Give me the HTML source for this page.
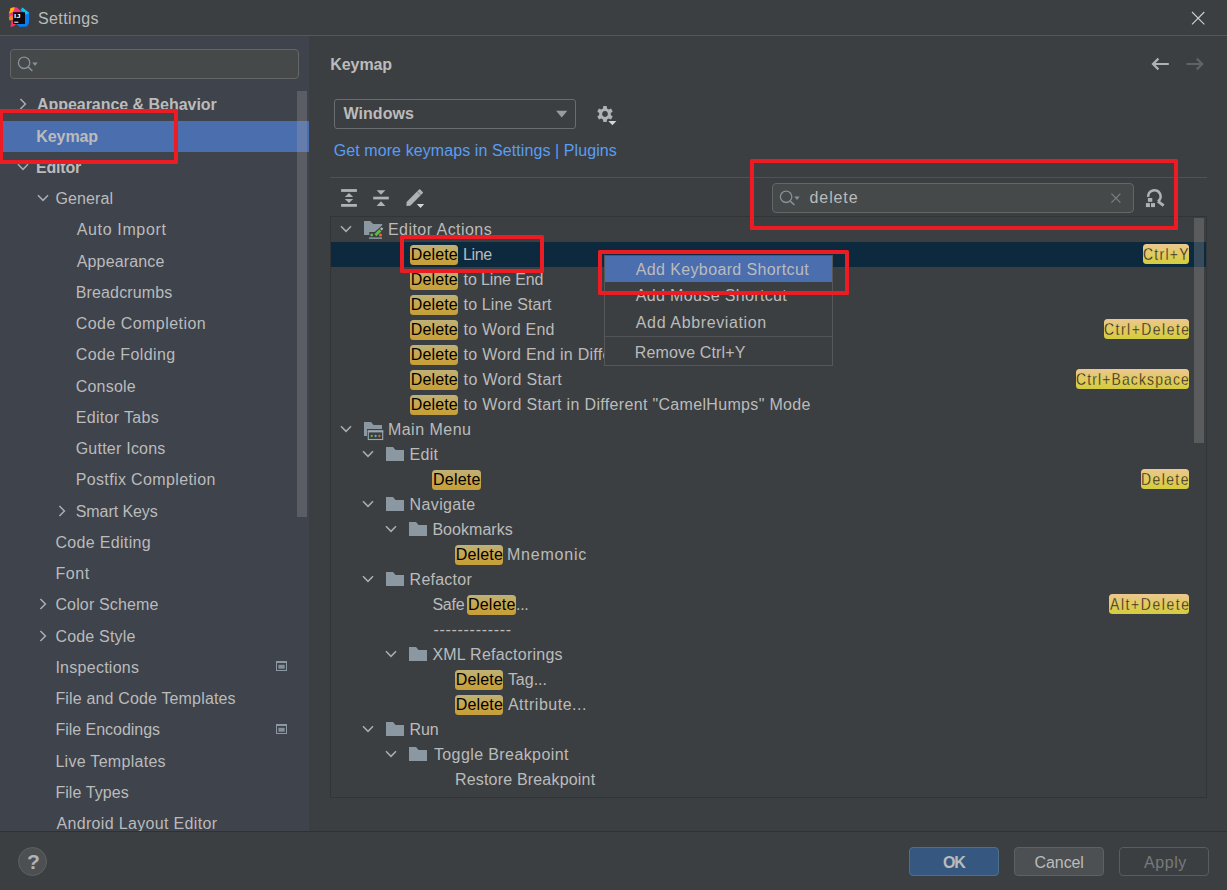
<!DOCTYPE html>
<html lang="en"><head><meta charset="utf-8"><title>Settings</title><style>
html,body{margin:0;padding:0}
body{width:1227px;height:890px;position:relative;overflow:hidden;background:#3c3f41;font-family:"Liberation Sans", sans-serif;font-size:16px;color:#bbbbbb}
body div,body span,body svg{position:absolute;display:block}
span{white-space:pre;line-height:20px;height:20px}
svg{overflow:visible}
</style></head>
<body>
<div style="left:0px;top:0px;width:1227px;height:35px;background:#3c3f41"></div>
<div style="left:0px;top:35px;width:1227px;height:1px;background:#555758"></div>
<div style="left:0px;top:36px;width:309px;height:795px;background:#3e434c"></div>
<div style="left:0px;top:831px;width:1227px;height:1px;background:#2f3133"></div>
<svg style="left:8px;top:6px" width="22" height="22" viewBox="0 0 22 22"><polygon points="1,6 4,1.5 9,1.5 13,5 11,11 6,13 0.8,10" fill="#fc2f7e"/><polygon points="2.5,2 7,1.2 5,6 1.2,7.5" fill="#fdb60d"/><polygon points="0.8,11 4,9 6,14 1.5,14.5" fill="#fc801d"/><polygon points="2.5,21 3.5,14 9,17 6,20" fill="#fe2d6f"/><polygon points="12.5,3.5 14.5,1.5 21.2,7 21,17 19,20.5 12,21 8.5,18.5 14,10" fill="#0a7bf2"/><polygon points="14.5,1.5 21.2,7 18,8.5 13,4" fill="#0cc4f5"/><rect x="5" y="6.2" width="12" height="11.8" fill="#0b0b0e"/><rect x="6.2" y="15.7" width="4.2" height="1" fill="#fff"/><text x="6" y="11.9" font-family="Liberation Sans, sans-serif" font-weight="700" font-size="6.2" fill="#fff" textLength="6.4" lengthAdjust="spacingAndGlyphs">IJ</text></svg>
<span style="left:37.9px;top:9px;font-size:16px;color:#bbbbbb;letter-spacing:0.41px;">Settings</span>
<svg style="left:1188px;top:8px" width="20" height="20" viewBox="0 0 20 20"><path d="M4 4 L16.3 16.3 M16.3 4 L4 16.3" stroke="#cfd0d1" stroke-width="1.1" fill="none"/></svg>
<div style="left:10px;top:49px;width:289px;height:30px;box-sizing:border-box;border:1px solid #646668;background:#45494a;border-radius:4px"></div>
<svg style="left:16px;top:54px" width="24" height="20" viewBox="0 0 24 20"><circle cx="8.1" cy="8.8" r="5.7" fill="none" stroke="#86929a" stroke-width="1.3"/><path d="M12.3 13.2 L16.4 17" stroke="#86929a" stroke-width="1.6" fill="none"/><path d="M16.3 8.6 L21.7 8.6 L19 11.9 Z" fill="#86929a"/></svg>
<div style="left:0px;top:121px;width:309px;height:31px;background:#4b6eaf"></div>
<div style="left:0;top:36px;width:309px;height:795px;overflow:hidden">
<span style="left:36.9px;top:59px;font-size:16px;color:#bbbbbb;letter-spacing:-0.03px;font-weight:700;">Appearance &amp; Behavior</span>
<svg style="left:15px;top:60.0px" width="16" height="16" viewBox="0 0 16 16"><path d="M5.4 3 L10.4 8 L5.4 13" fill="none" stroke="#abaeb0" stroke-width="1.55"/></svg>
<span style="left:36.3px;top:91px;font-size:16px;color:#bbbbbb;letter-spacing:-0.08px;font-weight:700;">Keymap</span>
<span style="left:35.9px;top:122px;font-size:16px;color:#bbbbbb;letter-spacing:-0.16px;font-weight:700;">Editor</span>
<svg style="left:15.2px;top:123.0px" width="16" height="16" viewBox="0 0 16 16"><path d="M3 5.3 L8 10.3 L13 5.3" fill="none" stroke="#abaeb0" stroke-width="1.55"/></svg>
<span style="left:55.4px;top:153px;font-size:16px;color:#bbbbbb;letter-spacing:0.12px;">General</span>
<svg style="left:35px;top:154.0px" width="16" height="16" viewBox="0 0 16 16"><path d="M3 5.3 L8 10.3 L13 5.3" fill="none" stroke="#abaeb0" stroke-width="1.55"/></svg>
<span style="left:76.7px;top:184px;font-size:16px;color:#bbbbbb;letter-spacing:0.65px;">Auto Import</span>
<span style="left:76.7px;top:216px;font-size:16px;color:#bbbbbb;letter-spacing:0.16px;">Appearance</span>
<span style="left:75.7px;top:247px;font-size:16px;color:#bbbbbb;letter-spacing:0.15px;">Breadcrumbs</span>
<span style="left:75.7px;top:278px;font-size:16px;color:#bbbbbb;letter-spacing:0.46px;">Code Completion</span>
<span style="left:75.7px;top:309px;font-size:16px;color:#bbbbbb;letter-spacing:0.39px;">Code Folding</span>
<span style="left:75.7px;top:341px;font-size:16px;color:#bbbbbb;letter-spacing:0.23px;">Console</span>
<span style="left:75.7px;top:372px;font-size:16px;color:#bbbbbb;letter-spacing:0.34px;">Editor Tabs</span>
<span style="left:75.7px;top:403px;font-size:16px;color:#bbbbbb;letter-spacing:0.23px;">Gutter Icons</span>
<span style="left:75.7px;top:434px;font-size:16px;color:#bbbbbb;letter-spacing:0.37px;">Postfix Completion</span>
<span style="left:75.7px;top:466px;font-size:16px;color:#bbbbbb;letter-spacing:-0.07px;">Smart Keys</span>
<svg style="left:54.3px;top:466.5px" width="16" height="16" viewBox="0 0 16 16"><path d="M5.4 3 L10.4 8 L5.4 13" fill="none" stroke="#abaeb0" stroke-width="1.55"/></svg>
<span style="left:55.4px;top:497px;font-size:16px;color:#bbbbbb;letter-spacing:0.33px;">Code Editing</span>
<span style="left:55.4px;top:528px;font-size:16px;color:#bbbbbb;letter-spacing:0.63px;">Font</span>
<span style="left:55.4px;top:559px;font-size:16px;color:#bbbbbb;letter-spacing:0.15px;">Color Scheme</span>
<svg style="left:34.9px;top:560.0px" width="16" height="16" viewBox="0 0 16 16"><path d="M5.4 3 L10.4 8 L5.4 13" fill="none" stroke="#abaeb0" stroke-width="1.55"/></svg>
<span style="left:55.4px;top:591px;font-size:16px;color:#bbbbbb;letter-spacing:0.19px;">Code Style</span>
<svg style="left:34.9px;top:591.5px" width="16" height="16" viewBox="0 0 16 16"><path d="M5.4 3 L10.4 8 L5.4 13" fill="none" stroke="#abaeb0" stroke-width="1.55"/></svg>
<span style="left:55.4px;top:622px;font-size:16px;color:#bbbbbb;letter-spacing:0.27px;">Inspections</span>
<span style="left:55.4px;top:653px;font-size:16px;color:#bbbbbb;letter-spacing:0.16px;">File and Code Templates</span>
<span style="left:55.4px;top:684px;font-size:16px;color:#bbbbbb;letter-spacing:-0.02px;">File Encodings</span>
<span style="left:55.4px;top:716px;font-size:16px;color:#bbbbbb;letter-spacing:0.29px;">Live Templates</span>
<span style="left:55.4px;top:747px;font-size:16px;color:#bbbbbb;letter-spacing:0.07px;">File Types</span>
<span style="left:56.4px;top:778px;font-size:16px;color:#bbbbbb;letter-spacing:0.34px;">Android Layout Editor</span>
<svg style="left:275px;top:623.8px" width="13" height="12" viewBox="0 0 13 12"><rect x="1.5" y="1.5" width="10" height="9" fill="none" stroke="#8d98a0" stroke-width="1"/><rect x="1" y="1" width="11" height="2" fill="#8d98a0"/><rect x="3.4" y="4.8" width="6.3" height="3.9" fill="#848f97"/></svg>
<svg style="left:275px;top:687px" width="13" height="12" viewBox="0 0 13 12"><rect x="1.5" y="1.5" width="10" height="9" fill="none" stroke="#8d98a0" stroke-width="1"/><rect x="1" y="1" width="11" height="2" fill="#8d98a0"/><rect x="3.4" y="4.8" width="6.3" height="3.9" fill="#848f97"/></svg>
</div>
<div style="left:297px;top:91px;width:10px;height:426px;background:rgba(166,166,166,0.28)"></div>
<span style="left:330.3px;top:55px;font-size:16px;color:#bbbbbb;letter-spacing:-0.08px;font-weight:700;">Keymap</span>
<svg style="left:1150px;top:54px" width="22" height="20" viewBox="0 0 22 20"><path d="M3 10 H18.8 M8.4 4.6 L3 10 L8.4 15.4" fill="none" stroke="#afb1b3" stroke-width="2.2"/></svg>
<svg style="left:1184px;top:54px" width="22" height="20" viewBox="0 0 22 20"><path d="M2.4 10 H18.2 M12.8 4.6 L18.2 10 L12.8 15.4" fill="none" stroke="#606365" stroke-width="2.2"/></svg>
<div style="left:334px;top:99px;width:242px;height:30px;box-sizing:border-box;border:1px solid #6a6c6d;border-radius:3px;background:#3c3f41"></div>
<span style="left:343.5px;top:104px;font-size:16px;color:#bbbbbb;letter-spacing:0.05px;font-weight:700;">Windows</span>
<svg style="left:554px;top:108px" width="16" height="12" viewBox="0 0 16 12"><path d="M2.1 2.8 H13.3 L7.7 9.4 Z" fill="#9a9da0"/></svg>
<svg style="left:596px;top:105px" width="22" height="22" viewBox="0 0 22 22"><path d="M6.96 3.46 L7.32 1.08 L10.68 1.08 L11.04 3.46 L12.77 4.46 L15.02 3.58 L16.70 6.50 L14.81 8.00 L14.81 10.00 L16.70 11.50 L15.02 14.42 L12.77 13.54 L11.04 14.54 L10.68 16.92 L7.32 16.92 L6.96 14.54 L5.23 13.54 L2.98 14.42 L1.30 11.50 L3.19 10.00 L3.19 8.00 L1.30 6.50 L2.98 3.58 L5.23 4.46 Z M9 6.1 a2.9 2.9 0 1 0 0.001 0 Z" fill="#afb1b3" fill-rule="evenodd"/><path d="M12.4 15.9 H20.4 L16.4 20.2 Z" fill="#d4d5d6"/></svg>
<span style="left:333.7px;top:141px;font-size:16px;color:#589df6;letter-spacing:0.09px;">Get more keymaps in Settings | Plugins</span>
<div style="left:330px;top:177px;width:877px;height:1px;background:#505354"></div>
<svg style="left:340px;top:188px" width="18" height="20" viewBox="0 0 18 20"><rect x="1.1" y="1.1" width="15.8" height="2.8" fill="#afb1b3"/><rect x="1.1" y="16" width="15.8" height="2.8" fill="#afb1b3"/><path d="M9 4.9 L13.2 9 H4.8 Z M4.8 11 H13.2 L9 15 Z" fill="#afb1b3"/></svg>
<svg style="left:372px;top:188px" width="18" height="20" viewBox="0 0 18 20"><rect x="1.2" y="8.7" width="15.6" height="2.7" fill="#afb1b3"/><path d="M4.6 2.2 H13.4 L9 6.8 Z M9 13.3 L13.4 18 H4.6 Z" fill="#afb1b3"/></svg>
<svg style="left:404px;top:187px" width="22" height="22" viewBox="0 0 22 22"><path d="M2.4 19 L2.6 15 L15 2.6 a0.9 0.9 0 0 1 1.3 0 L18.7 5 a0.9 0.9 0 0 1 0 1.3 L6.3 18.8 Z" fill="#afb1b3"/><path d="M13.1 4.4 L16.9 8.2" stroke="#3c3f41" stroke-width="0.5" fill="none"/><path d="M12.8 17 H20.2 L16.5 21.1 Z" fill="#d4d5d6"/></svg>
<div style="left:772px;top:183px;width:362px;height:30px;box-sizing:border-box;border:1px solid #646668;background:#45494a;border-radius:4px"></div>
<svg style="left:778px;top:188px" width="24" height="20" viewBox="0 0 24 20"><circle cx="8.1" cy="8.8" r="5.7" fill="none" stroke="#86929a" stroke-width="1.3"/><path d="M12.3 13.2 L16.4 17" stroke="#86929a" stroke-width="1.6" fill="none"/><path d="M16.3 8.6 L21.7 8.6 L19 11.9 Z" fill="#86929a"/></svg>
<span style="left:809.6px;top:188px;font-size:16px;color:#bbbbbb;letter-spacing:0.88px;">delete</span>
<svg style="left:1108px;top:190px" width="16" height="16" viewBox="0 0 16 16"><path d="M3.4 3.6 L12.4 12.6 M12.4 3.6 L3.4 12.6" stroke="#7f8385" stroke-width="1.1" fill="none"/></svg>
<svg style="left:1144px;top:187px" width="24" height="22" viewBox="0 0 24 22"><path d="M4.2 9.9 A6.2 6.2 0 1 1 13.9 14.5" fill="none" stroke="#afb1b3" stroke-width="2.6"/><path d="M14 14.4 L19.7 18.6" stroke="#afb1b3" stroke-width="3" fill="none"/><rect x="3.9" y="11" width="4.4" height="3.8" fill="#afb1b3"/><rect x="1.9" y="16.1" width="4" height="4" fill="#afb1b3"/><rect x="7" y="16.1" width="4" height="4" fill="#afb1b3"/></svg>
<div style="left:330px;top:216px;width:877px;height:582px;box-sizing:border-box;border:1px solid #323436;background:#3c3f41"></div>
<div style="left:331px;top:242px;width:875px;height:25px;background:#0d293e"></div>
<svg style="left:338px;top:221px" width="16" height="16" viewBox="0 0 16 16"><path d="M3 5.3 L8 10.3 L13 5.3" fill="none" stroke="#abaeb0" stroke-width="1.55"/></svg>
<svg style="left:364px;top:221px" width="20" height="19" viewBox="0 0 20 19"><path d="M0 0 H6.1 L9.2 2.9 H18.2 V4.3 L10.7 10.9 H5.3 V14 H0 Z" fill="#8b98a2"/><path d="M11.4 14.2 L16.3 9.4" stroke="#62b946" stroke-width="2.9" fill="none"/><rect x="16.5" y="6.7" width="2.3" height="2.3" fill="#b3bcc3" transform="rotate(45 17.65 7.85)"/><circle cx="7.7" cy="14" r="1.4" fill="#62b946"/><circle cx="16.5" cy="14" r="1.5" fill="#f4661f"/><rect x="5" y="16.4" width="13" height="1.5" fill="#8b98a2"/></svg>
<span style="left:388px;top:220px;font-size:16px;color:#bbbbbb;letter-spacing:0.45px;">Editor Actions</span>
<div style="left:410px;top:245px;width:48px;height:20px;background:linear-gradient(#beb17a,#c9a545 55%,#c59f3a);border-radius:3.5px"></div>
<span style="left:410.7px;top:245px;font-size:16px;color:#000000;letter-spacing:0.16px;">Delete</span>
<span style="left:462.9px;top:245px;font-size:16px;color:#bbbbbb;letter-spacing:-0.3px;">Line</span>
<div style="left:1143px;top:244px;width:46px;height:20px;background:linear-gradient(#ecc793,#e0cc55 60%,#d3cd3d);border-radius:3.5px"></div>
<span style="left:1143.03px;top:245px;font-size:16px;color:#222425;letter-spacing:1.48px;-webkit-text-stroke:0.3px #e2cb66;transform:scaleX(0.87);transform-origin:0 0;">Ctrl+Y</span>
<div style="left:410px;top:270px;width:48px;height:20px;background:linear-gradient(#beb17a,#c9a545 55%,#c59f3a);border-radius:3.5px"></div>
<span style="left:410.7px;top:270px;font-size:16px;color:#000000;letter-spacing:0.16px;">Delete</span>
<span style="left:463.6px;top:270px;font-size:16px;color:#bbbbbb;letter-spacing:-0.11px;">to Line End</span>
<div style="left:410px;top:295px;width:48px;height:20px;background:linear-gradient(#beb17a,#c9a545 55%,#c59f3a);border-radius:3.5px"></div>
<span style="left:410.7px;top:295px;font-size:16px;color:#000000;letter-spacing:0.16px;">Delete</span>
<span style="left:463.6px;top:295px;font-size:16px;color:#bbbbbb;letter-spacing:0.14px;">to Line Start</span>
<div style="left:410px;top:320px;width:48px;height:20px;background:linear-gradient(#beb17a,#c9a545 55%,#c59f3a);border-radius:3.5px"></div>
<span style="left:410.7px;top:320px;font-size:16px;color:#000000;letter-spacing:0.16px;">Delete</span>
<span style="left:463.6px;top:320px;font-size:16px;color:#bbbbbb;letter-spacing:0.22px;">to Word End</span>
<div style="left:1104px;top:319px;width:85px;height:20px;background:linear-gradient(#ecc793,#e0cc55 60%,#d3cd3d);border-radius:3.5px"></div>
<span style="left:1103.93px;top:320px;font-size:16px;color:#222425;letter-spacing:1.73px;-webkit-text-stroke:0.3px #e2cb66;transform:scaleX(0.87);transform-origin:0 0;">Ctrl+Delete</span>
<div style="left:410px;top:345px;width:48px;height:20px;background:linear-gradient(#beb17a,#c9a545 55%,#c59f3a);border-radius:3.5px"></div>
<span style="left:410.7px;top:345px;font-size:16px;color:#000000;letter-spacing:0.16px;">Delete</span>
<span style="left:463.6px;top:345px;font-size:16px;color:#bbbbbb;letter-spacing:0.27px;">to Word End in Different &quot;CamelHumps&quot; Mode</span>
<div style="left:410px;top:370px;width:48px;height:20px;background:linear-gradient(#beb17a,#c9a545 55%,#c59f3a);border-radius:3.5px"></div>
<span style="left:410.7px;top:370px;font-size:16px;color:#000000;letter-spacing:0.16px;">Delete</span>
<span style="left:463.6px;top:370px;font-size:16px;color:#bbbbbb;letter-spacing:0.35px;">to Word Start</span>
<div style="left:1076px;top:369px;width:113px;height:20px;background:linear-gradient(#ecc793,#e0cc55 60%,#d3cd3d);border-radius:3.5px"></div>
<span style="left:1076.23px;top:370px;font-size:16px;color:#222425;letter-spacing:1.32px;-webkit-text-stroke:0.3px #e2cb66;transform:scaleX(0.87);transform-origin:0 0;">Ctrl+Backspace</span>
<div style="left:410px;top:395px;width:48px;height:20px;background:linear-gradient(#beb17a,#c9a545 55%,#c59f3a);border-radius:3.5px"></div>
<span style="left:410.7px;top:395px;font-size:16px;color:#000000;letter-spacing:0.16px;">Delete</span>
<span style="left:463.6px;top:395px;font-size:16px;color:#bbbbbb;letter-spacing:0.33px;">to Word Start in Different &quot;CamelHumps&quot; Mode</span>
<svg style="left:338px;top:421px" width="16" height="16" viewBox="0 0 16 16"><path d="M3 5.3 L8 10.3 L13 5.3" fill="none" stroke="#abaeb0" stroke-width="1.55"/></svg>
<svg style="left:364px;top:422px" width="20" height="19" viewBox="0 0 20 19"><path d="M0 0 H7 L9.6 2.9 H18 V7 H3 V14 H0 Z" fill="#8b98a2"/><rect x="4.3" y="8.9" width="14.4" height="8.6" fill="#3c3f41" stroke="#9aa7b0" stroke-width="1.1"/><rect x="3.8" y="8.4" width="15.4" height="2" fill="#9aa7b0"/><circle cx="7.7" cy="14" r="1.15" fill="#62b543"/><circle cx="11.6" cy="14" r="1.15" fill="#40b6e0"/><circle cx="15.4" cy="14" r="1.15" fill="#f26522"/></svg>
<span style="left:387.9px;top:420px;font-size:16px;color:#bbbbbb;letter-spacing:0.49px;">Main Menu</span>
<svg style="left:360px;top:446px" width="16" height="16" viewBox="0 0 16 16"><path d="M3 5.3 L8 10.3 L13 5.3" fill="none" stroke="#abaeb0" stroke-width="1.55"/></svg>
<svg style="left:386px;top:447px" width="19" height="15" viewBox="0 0 19 15"><path d="M0 0 H7 L9.6 2.9 H18 V14 H0 Z" fill="#8b98a2"/></svg>
<span style="left:409.6px;top:445px;font-size:16px;color:#bbbbbb;letter-spacing:0.27px;">Edit</span>
<div style="left:432px;top:470px;width:49px;height:20px;background:linear-gradient(#beb17a,#c9a545 55%,#c59f3a);border-radius:3.5px"></div>
<span style="left:433px;top:470px;font-size:16px;color:#000000;letter-spacing:0.22px;">Delete</span>
<div style="left:1141px;top:469px;width:48px;height:20px;background:linear-gradient(#ecc793,#e0cc55 60%,#d3cd3d);border-radius:3.5px"></div>
<span style="left:1141.43px;top:470px;font-size:16px;color:#222425;letter-spacing:1.64px;-webkit-text-stroke:0.3px #e2cb66;transform:scaleX(0.87);transform-origin:0 0;">Delete</span>
<svg style="left:360px;top:496px" width="16" height="16" viewBox="0 0 16 16"><path d="M3 5.3 L8 10.3 L13 5.3" fill="none" stroke="#abaeb0" stroke-width="1.55"/></svg>
<svg style="left:386px;top:497px" width="19" height="15" viewBox="0 0 19 15"><path d="M0 0 H7 L9.6 2.9 H18 V14 H0 Z" fill="#8b98a2"/></svg>
<span style="left:409.6px;top:495px;font-size:16px;color:#bbbbbb;letter-spacing:0.36px;">Navigate</span>
<svg style="left:383px;top:521px" width="16" height="16" viewBox="0 0 16 16"><path d="M3 5.3 L8 10.3 L13 5.3" fill="none" stroke="#abaeb0" stroke-width="1.55"/></svg>
<svg style="left:409px;top:522px" width="19" height="15" viewBox="0 0 19 15"><path d="M0 0 H7 L9.6 2.9 H18 V14 H0 Z" fill="#8b98a2"/></svg>
<span style="left:432.4px;top:520px;font-size:16px;color:#bbbbbb;letter-spacing:0.04px;">Bookmarks</span>
<div style="left:455px;top:545px;width:48px;height:20px;background:linear-gradient(#beb17a,#c9a545 55%,#c59f3a);border-radius:3.5px"></div>
<span style="left:455.8px;top:545px;font-size:16px;color:#000000;letter-spacing:0.16px;">Delete</span>
<span style="left:506.9px;top:545px;font-size:16px;color:#bbbbbb;letter-spacing:0.8px;">Mnemonic</span>
<svg style="left:360px;top:571px" width="16" height="16" viewBox="0 0 16 16"><path d="M3 5.3 L8 10.3 L13 5.3" fill="none" stroke="#abaeb0" stroke-width="1.55"/></svg>
<svg style="left:386px;top:572px" width="19" height="15" viewBox="0 0 19 15"><path d="M0 0 H7 L9.6 2.9 H18 V14 H0 Z" fill="#8b98a2"/></svg>
<span style="left:409.6px;top:570px;font-size:16px;color:#bbbbbb;letter-spacing:0.24px;">Refactor</span>
<span style="left:432.4px;top:595px;font-size:16px;color:#bbbbbb;letter-spacing:-0.23px;">Safe</span>
<div style="left:467px;top:595px;width:49px;height:20px;background:linear-gradient(#beb17a,#c9a545 55%,#c59f3a);border-radius:3.5px"></div>
<span style="left:467.9px;top:595px;font-size:16px;color:#000000;letter-spacing:0.26px;">Delete</span>
<span style="left:516.1px;top:595px;font-size:16px;color:#bbbbbb;letter-spacing:-0.35px;">...</span>
<div style="left:1109px;top:594px;width:80px;height:20px;background:linear-gradient(#ecc793,#e0cc55 60%,#d3cd3d);border-radius:3.5px"></div>
<span style="left:1109.9px;top:595px;font-size:16px;color:#222425;letter-spacing:1.83px;-webkit-text-stroke:0.3px #e2cb66;transform:scaleX(0.87);transform-origin:0 0;">Alt+Delete</span>
<span style="left:433.4px;top:620px;font-size:16px;color:#bbbbbb;letter-spacing:0.71px;">-------------</span>
<svg style="left:383px;top:646px" width="16" height="16" viewBox="0 0 16 16"><path d="M3 5.3 L8 10.3 L13 5.3" fill="none" stroke="#abaeb0" stroke-width="1.55"/></svg>
<svg style="left:409px;top:647px" width="19" height="15" viewBox="0 0 19 15"><path d="M0 0 H7 L9.6 2.9 H18 V14 H0 Z" fill="#8b98a2"/></svg>
<span style="left:432.4px;top:645px;font-size:16px;color:#bbbbbb;letter-spacing:0.24px;">XML Refactorings</span>
<div style="left:455px;top:670px;width:48px;height:20px;background:linear-gradient(#beb17a,#c9a545 55%,#c59f3a);border-radius:3.5px"></div>
<span style="left:455.8px;top:670px;font-size:16px;color:#000000;letter-spacing:0.16px;">Delete</span>
<span style="left:507.9px;top:670px;font-size:16px;color:#bbbbbb;letter-spacing:-0.02px;">Tag...</span>
<div style="left:455px;top:695px;width:48px;height:20px;background:linear-gradient(#beb17a,#c9a545 55%,#c59f3a);border-radius:3.5px"></div>
<span style="left:455.8px;top:695px;font-size:16px;color:#000000;letter-spacing:0.16px;">Delete</span>
<span style="left:507.9px;top:695px;font-size:16px;color:#bbbbbb;letter-spacing:0.51px;">Attribute...</span>
<svg style="left:360px;top:721px" width="16" height="16" viewBox="0 0 16 16"><path d="M3 5.3 L8 10.3 L13 5.3" fill="none" stroke="#abaeb0" stroke-width="1.55"/></svg>
<svg style="left:386px;top:722px" width="19" height="15" viewBox="0 0 19 15"><path d="M0 0 H7 L9.6 2.9 H18 V14 H0 Z" fill="#8b98a2"/></svg>
<span style="left:409.6px;top:720px;font-size:16px;color:#bbbbbb;letter-spacing:-0.2px;">Run</span>
<svg style="left:383px;top:746px" width="16" height="16" viewBox="0 0 16 16"><path d="M3 5.3 L8 10.3 L13 5.3" fill="none" stroke="#abaeb0" stroke-width="1.55"/></svg>
<svg style="left:409px;top:747px" width="19" height="15" viewBox="0 0 19 15"><path d="M0 0 H7 L9.6 2.9 H18 V14 H0 Z" fill="#8b98a2"/></svg>
<span style="left:433.9px;top:745px;font-size:16px;color:#bbbbbb;letter-spacing:0.4px;">Toggle Breakpoint</span>
<span style="left:454.9px;top:770px;font-size:16px;color:#bbbbbb;letter-spacing:0.19px;">Restore Breakpoint</span>
<div style="left:1194px;top:218px;width:10px;height:225px;background:rgba(166,166,166,0.28)"></div>
<div style="left:604px;top:255px;width:229px;height:111px;box-sizing:border-box;border:1px solid #555759;background:#3c3f41"></div>
<div style="left:605px;top:256px;width:227px;height:26px;background:#4b6eaf"></div>
<span style="left:635.8px;top:260px;font-size:16px;color:#bbbbbb;letter-spacing:0.37px;">Add Keyboard Shortcut</span>
<span style="left:635.8px;top:286px;font-size:16px;color:#bbbbbb;letter-spacing:0.35px;">Add Mouse Shortcut</span>
<span style="left:635.8px;top:313px;font-size:16px;color:#bbbbbb;letter-spacing:0.63px;">Add Abbreviation</span>
<div style="left:605px;top:336px;width:227px;height:1px;background:#515355"></div>
<span style="left:634.8px;top:343px;font-size:16px;color:#bbbbbb;letter-spacing:0.14px;">Remove Ctrl+Y</span>
<div style="left:-1px;top:109px;width:179px;height:55px;box-sizing:border-box;border:4px solid #ec1c24;border-radius:1.5px"></div>
<div style="left:399.5px;top:235px;width:144.5px;height:38px;box-sizing:border-box;border:4px solid #ec1c24;border-radius:1.5px"></div>
<div style="left:597.5px;top:250px;width:251.5px;height:45px;box-sizing:border-box;border:4px solid #ec1c24;border-radius:1.5px"></div>
<div style="left:750px;top:159px;width:428px;height:71px;box-sizing:border-box;border:4px solid #ec1c24;border-radius:1.5px"></div>
<div style="left:18px;top:847px;width:29px;height:29px;box-sizing:border-box;border:1px solid #5e6162;background:#4c5052;border-radius:50%"></div>
<span style="left:27px;top:852px;font-size:21px;color:#b0b2b3;letter-spacing:0px;font-weight:700;">?</span>
<div style="left:909px;top:847px;width:90px;height:29px;box-sizing:border-box;border:1px solid #4c708c;background:#365880;border-radius:4px"></div>
<span style="left:942.9px;top:853px;font-size:16px;color:#bbbbbb;letter-spacing:-1.2px;font-weight:700;">OK</span>
<div style="left:1014px;top:847px;width:90px;height:29px;box-sizing:border-box;border:1px solid #5e6162;background:#4c5052;border-radius:4px"></div>
<span style="left:1034.6px;top:853px;font-size:16px;color:#bbbbbb;letter-spacing:-0.1px;">Cancel</span>
<div style="left:1119px;top:847px;width:90px;height:29px;box-sizing:border-box;border:1px solid #5a5d5e;background:#3c3f41;border-radius:4px"></div>
<span style="left:1143.9px;top:853px;font-size:16px;color:#777a7b;letter-spacing:0.6px;">Apply</span>
</body></html>
